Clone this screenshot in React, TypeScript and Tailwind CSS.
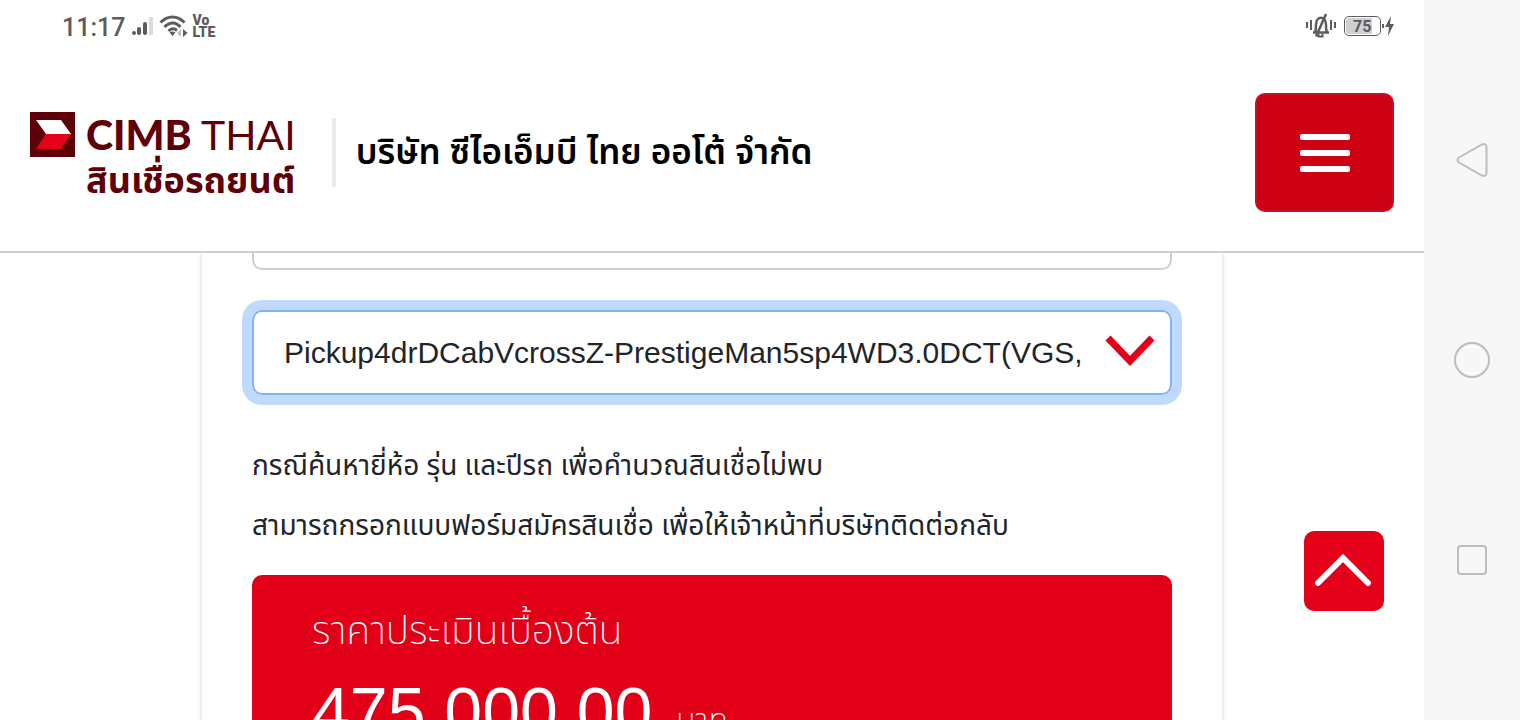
const StatusBar = () => {
  return (
    <div className="flex h-[52px] shrink-0 items-center justify-between pl-[62px] pr-[30px] text-[#5c5c5c]">
      <div className="flex items-center gap-1.5">
        <span className="pt-1 font-['Roboto',sans-serif] text-[25px] leading-8 font-medium">
          11:17
        </span>
        <svg width="24" height="20" viewBox="0 0 24 20" fill="currentColor">
          <rect x="1" y="15" width="4" height="4" rx="2" />
          <rect x="6" y="11" width="4" height="8" rx="2" />
          <rect x="12" y="6" width="4" height="13" rx="2" />
          <rect x="18" y="1" width="4" height="18" rx="1" fill="#dcdcdc" />
        </svg>
        <svg
          width="29"
          height="24"
          viewBox="0 0 29 24"
          fill="none"
          stroke="currentColor"
          strokeWidth="3"
          className="-ml-0.5"
        >
          <path d="M1.500 8.500C8.500 1 18.500 1 25.500 8.500" />
          <path d="M5.500 13C10.500 7.500 17 7.500 21.500 13" />
          <path d="M9.500 17C12.500 14 15 14 18 16.500" />
          <path
            d="M10.500 18.500 13.500 22l3-3.500c-2-1.500-4-1.500-6 0z"
            fill="currentColor"
            stroke="none"
          />
          <path d="M22 15v8l-4-4z" fill="#bdbdbd" stroke="none" />
          <path d="M24 15v8l4.500-4z" fill="currentColor" stroke="none" />
        </svg>
        <div className="-ml-0.5 flex flex-col font-['Roboto',sans-serif] text-[14px] leading-3 font-black">
          <span>Vo</span>
          <span>LTE</span>
        </div>
      </div>
      <div className="flex items-center gap-2">
        <svg
          width="30"
          height="26"
          viewBox="0 0 30 26"
          fill="none"
          stroke="currentColor"
          strokeWidth="2"
        >
          <path d="M1 9v6M5 7v10M25 7v10M29 9v6" />
          <path
            d="M7 19.500h16M9 19.500c1-2 1-4 1-8 0-9 10-9 10 0 0 4 0 6 1 8"
            strokeWidth="2.500"
          />
          <path d="M12.500 21v2.500h4V21" />
          <path d="M10 23.500 20 1" strokeWidth="2.500" />
        </svg>
        <div className="flex items-center gap-px">
          <div className="flex h-5 w-[37px] rounded-[5px] border border-[#5c5c5c] p-px">
            <span className="w-[26px] rounded-l-[3px] bg-[#d0d0d0] pl-[7px] font-['Roboto',sans-serif] text-[16px] leading-[18px] font-bold">
              75
            </span>
          </div>
          <svg width="12" height="20" viewBox="0 0 12 20" fill="currentColor">
            <path d="M0 8h2v4H0zM9 0 3 11h4l-1 9 6-12H8z" />
          </svg>
        </div>
      </div>
    </div>
  );
};

const Logo = () => {
  return (
    <a href="#" className="flex gap-[11px] pt-3.5 text-[#5f0009]">
      <svg width="45" height="45" viewBox="0 0 45 45">
        <path fill="#5f0009" d="M0 0h45v45H0z" />
        <path fill="#fff" d="M6 8h25l10 14H16z" />
        <path fill="#e50019" d="M16 22h25l-10 15H6z" />
      </svg>
      <div className="flex flex-col">
        <span className="font-['Lato',sans-serif] text-[41px] leading-[45px] whitespace-nowrap">
          <b className="font-black">CIMB</b> THAI
        </span>
        <span className="text-[36px] leading-[50px] font-bold whitespace-nowrap">
          สินเชื่อรถยนต์
        </span>
      </div>
    </a>
  );
};

const Header = () => {
  return (
    <header className="flex h-[201px] shrink-0 items-center justify-between border-b-2 border-[#cfcfcf] px-[30px] pt-0.5">
      <div className="flex items-center">
        <Logo />
        <div className="ml-9 flex h-[69px] items-center border-l-4 border-[#ebebeb] pt-1 pl-5 text-[35px] font-semibold whitespace-nowrap text-black">
          บริษัท ซีไอเอ็มบี ไทย ออโต้ จำกัด
        </div>
      </div>
      <button
        aria-label="เมนู"
        className="flex h-[119px] w-[139px] flex-col items-center justify-center gap-2.5 rounded-[10px] border-2 border-[#c81025] bg-[#cd0014]"
      >
        <span className="h-1.5 w-[50px] rounded-xs bg-white" />
        <span className="h-1.5 w-[50px] rounded-xs bg-white" />
        <span className="h-1.5 w-[50px] rounded-xs bg-white" />
      </button>
    </header>
  );
};

const Estimate = () => {
  return (
    <section className="mx-auto flex w-full max-w-[1020px] flex-col px-[50px] shadow-[0_0_5px_rgba(0,0,0,0.2)]">
      <select
        aria-label="ปีรถ"
        className="h-[17px] w-full appearance-none rounded-b-[10px] border-2 border-t-0 border-[#cfcfcf] bg-white"
      />
      <div className="mt-10 grid items-center rounded-[10px] ring-10 ring-[#c0dafe]">
        <select
          aria-label="รุ่นรถ"
          className="col-start-1 row-start-1 h-[85px] w-full appearance-none rounded-[10px] border-2 border-[#82b2f5] bg-white pr-[80px] pl-[30px] font-['Liberation_Sans',Arial,sans-serif] text-[30px] text-[#212529] outline-none"
        >
          <option>Pickup4drDCabVcrossZ-PrestigeMan5sp4WD3.0DCT(VGS,</option>
        </select>
        <svg
          width="50"
          height="38"
          viewBox="0 0 50 38"
          fill="none"
          stroke="#e50019"
          strokeWidth="7"
          className="pointer-events-none col-start-1 row-start-1 mr-[17px] justify-self-end"
        >
          <path d="M3 4 25 27 47 4" />
        </svg>
      </div>
      <p className="mt-[42px] text-[28px] leading-[60px] text-[#212529]">
        กรณีค้นหายี่ห้อ รุ่น และปีรถ เพื่อคำนวณสินเชื่อไม่พบ
        <br />
        สามารถกรอกแบบฟอร์มสมัครสินเชื่อ เพื่อให้เจ้าหน้าที่บริษัทติดต่อกลับ
      </p>
      <div className="mt-[18px] rounded-[10px] bg-[#e20019] px-[60px] py-[26px] text-white">
        <h2 className="text-[39px] leading-[64px] font-extralight">
          ราคาประเมินเบื้องต้น
        </h2>
        <div className="mt-1.5 flex items-center gap-6">
          <span className="font-['Liberation_Sans',Arial,sans-serif] text-[68px] leading-[80px]">
            475,000.00
          </span>
          <span className="pt-5 text-[32px] leading-10 font-extralight">
            บาท
          </span>
        </div>
      </div>
    </section>
  );
};

const NavBar = () => {
  return (
    <nav className="flex w-24 shrink-0 flex-col items-center justify-around bg-[#f7f7f7] py-[60px] text-[#bdbdbd]">
      <button aria-label="Back">
        <svg
          width="40"
          height="40"
          viewBox="0 0 40 40"
          fill="none"
          stroke="currentColor"
          strokeWidth="2"
        >
          <path d="M7 17.500 30 4.500q4-1.500 4.500 2.500v26q-.5 4-4.500 2.500L7 22.500q-3-2.500 0-5z" />
        </svg>
      </button>
      <button aria-label="Home">
        <svg
          width="40"
          height="40"
          viewBox="0 0 40 40"
          fill="none"
          stroke="currentColor"
          strokeWidth="2"
        >
          <circle cx="20" cy="20" r="17" />
        </svg>
      </button>
      <button aria-label="Recent apps">
        <svg
          width="40"
          height="40"
          viewBox="0 0 40 40"
          fill="none"
          stroke="currentColor"
          strokeWidth="2"
        >
          <rect x="6" y="6" width="28" height="28" rx="3" />
        </svg>
      </button>
    </nav>
  );
};

const App = () => {
  return (
    <div className="flex h-screen overflow-hidden bg-white font-['Noto_Sans_Thai','Noto_Sans',sans-serif]">
      <div className="relative flex min-w-0 flex-1 flex-col">
        <StatusBar />
        <Header />
        <main className="min-h-0 flex-1 overflow-hidden">
          <Estimate />
        </main>
        <button
          aria-label="กลับขึ้นด้านบน"
          className="absolute right-10 bottom-[109px] flex h-20 w-20 items-center justify-center rounded-[10px] bg-[#e50019]"
        >
          <svg
            width="60"
            height="36"
            viewBox="0 0 60 36"
            fill="none"
            stroke="#fff"
            strokeWidth="6"
            strokeLinecap="round"
          >
            <path d="M4 30 29 5 54 30" />
          </svg>
        </button>
      </div>
      <NavBar />
    </div>
  );
};

export default App;
